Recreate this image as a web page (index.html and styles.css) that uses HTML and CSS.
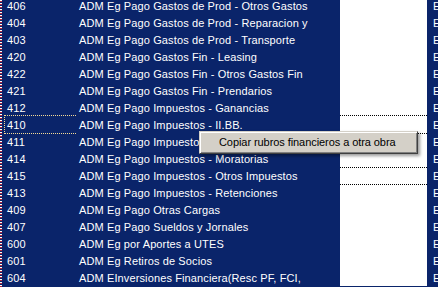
FILE: index.html
```html
<!DOCTYPE html>
<html>
<head>
<meta charset="utf-8">
<link rel="stylesheet" href="styles.css">
</head>
<body>
<div class="view">
  <div class="strip"></div>
  <div class="gutter"></div>
  <div class="grid">
    <div class="row"><div class="c num">406</div><div class="c desc">ADM Eg Pago Gastos de Prod - Otros Gastos</div><div class="c blank"></div><div class="c extra">E</div></div>
    <div class="row"><div class="c num">404</div><div class="c desc">ADM Eg Pago Gastos de Prod - Reparacion y</div><div class="c blank"></div><div class="c extra">E</div></div>
    <div class="row"><div class="c num">403</div><div class="c desc">ADM Eg Pago Gastos de Prod - Transporte</div><div class="c blank"></div><div class="c extra">E</div></div>
    <div class="row"><div class="c num">420</div><div class="c desc">ADM Eg Pago Gastos Fin - Leasing</div><div class="c blank"></div><div class="c extra">E</div></div>
    <div class="row"><div class="c num">422</div><div class="c desc">ADM Eg Pago Gastos Fin - Otros Gastos Fin</div><div class="c blank"></div><div class="c extra">E</div></div>
    <div class="row"><div class="c num">421</div><div class="c desc">ADM Eg Pago Gastos Fin - Prendarios</div><div class="c blank"></div><div class="c extra">E</div></div>
    <div class="row"><div class="c num">412</div><div class="c desc">ADM Eg Pago Impuestos - Ganancias</div><div class="c blank"></div><div class="c extra">E</div></div>
    <div class="row focus"><div class="c num">410</div><div class="c desc">ADM Eg Pago Impuestos - II.BB.</div><div class="c blank"></div><div class="c extra">E</div></div>
    <div class="row"><div class="c num">411</div><div class="c desc">ADM Eg Pago Impuestos - IVA</div><div class="c blank"></div><div class="c extra">E</div></div>
    <div class="row"><div class="c num">414</div><div class="c desc">ADM Eg Pago Impuestos - Moratorias</div><div class="c blank"></div><div class="c extra">E</div></div>
    <div class="row"><div class="c num">415</div><div class="c desc">ADM Eg Pago Impuestos - Otros Impuestos</div><div class="c blank cellfocus"></div><div class="c extra">E</div></div>
    <div class="row"><div class="c num">413</div><div class="c desc">ADM Eg Pago Impuestos - Retenciones</div><div class="c blank"></div><div class="c extra">E</div></div>
    <div class="row"><div class="c num">409</div><div class="c desc">ADM Eg Pago Otras Cargas</div><div class="c blank"></div><div class="c extra">E</div></div>
    <div class="row"><div class="c num">407</div><div class="c desc">ADM Eg Pago Sueldos y Jornales</div><div class="c blank"></div><div class="c extra">E</div></div>
    <div class="row"><div class="c num">600</div><div class="c desc">ADM Eg por Aportes a UTES</div><div class="c blank"></div><div class="c extra">E</div></div>
    <div class="row"><div class="c num">601</div><div class="c desc">ADM Eg Retiros de Socios</div><div class="c blank"></div><div class="c extra">E</div></div>
    <div class="row"><div class="c num">604</div><div class="c desc">ADM EInversiones Financiera(Resc PF, FCI,</div><div class="c blank"></div><div class="c extra">E</div></div>
  </div>
</div>
<div class="menu">
  <div class="item">Copiar rubros financieros a otra obra</div>
</div>
</body>
</html>
```

FILE: styles.css
```css
html, body {
  margin: 0;
  padding: 0;
  width: 438px;
  height: 287px;
  overflow: hidden;
  background: #0a246a;
}

body {
  position: relative;
  font-family: "Liberation Sans", Arial, sans-serif;
  font-size: 11px;
}

.view {
  display: flex;
  height: 287px;
  overflow: hidden;
}

.strip {
  width: 2px;
  flex: none;
  background: repeating-linear-gradient(to bottom, #ffffff 0 1px, #b02840 1px 2px, #0a246a 2px 3px);
}

.gutter {
  width: 2px;
  flex: none;
}

.grid {
  flex: 1;
  margin-top: -3px;
  display: flex;
  flex-direction: column;
}

.row {
  display: grid;
  grid-template-columns: 72px 264px 87px 1fr;
  height: 17px;
}

.c {
  position: relative;
  height: 17px;
  box-sizing: border-box;
  padding-top: 2px;
  line-height: 15px;
  color: #ffffff;
  white-space: nowrap;
  overflow: visible;
  letter-spacing: 0.12px;
}

.num { padding-left: 3px; }
.desc { padding-left: 3px; overflow: hidden; }
.blank { background: #ffffff; }
.extra { padding-left: 6px; overflow: hidden; }

.focus .c::after {
  content: "";
  position: absolute;
  left: 0;
  right: 0;
  top: -1px;
  bottom: -1px;
  border-top: 1px dotted #f5db95;
  border-bottom: 1px dotted #f5db95;
  z-index: 1;
}

.focus .num::after {
  border-left: 1px dotted #f5db95;
}

.focus .blank::after {
  border-top-color: #000000;
  border-bottom-color: #000000;
}

.cellfocus::after {
  content: "";
  position: absolute;
  left: 0;
  right: 0;
  top: 0;
  bottom: -1px;
  border-top: 1px dotted #000000;
  border-bottom: 1px dotted #000000;
  z-index: 1;
}

.menu {
  position: absolute;
  left: 199px;
  top: 131px;
  width: 219px;
  height: 23px;
  box-sizing: border-box;
  background: #d4d0c8;
  border: 1px solid;
  border-color: #d4d0c8 #404040 #404040 #d4d0c8;
  box-shadow: inset 1px 1px 0 #ffffff, inset -1px -1px 0 #808080, 2px 2px 3px rgba(0, 0, 0, 0.4);
  padding: 2px 2px;
  z-index: 5;
}

.item {
  height: 17px;
  line-height: 17px;
  padding-left: 17px;
  color: #000000;
  letter-spacing: -0.07px;
  white-space: nowrap;
}
```
